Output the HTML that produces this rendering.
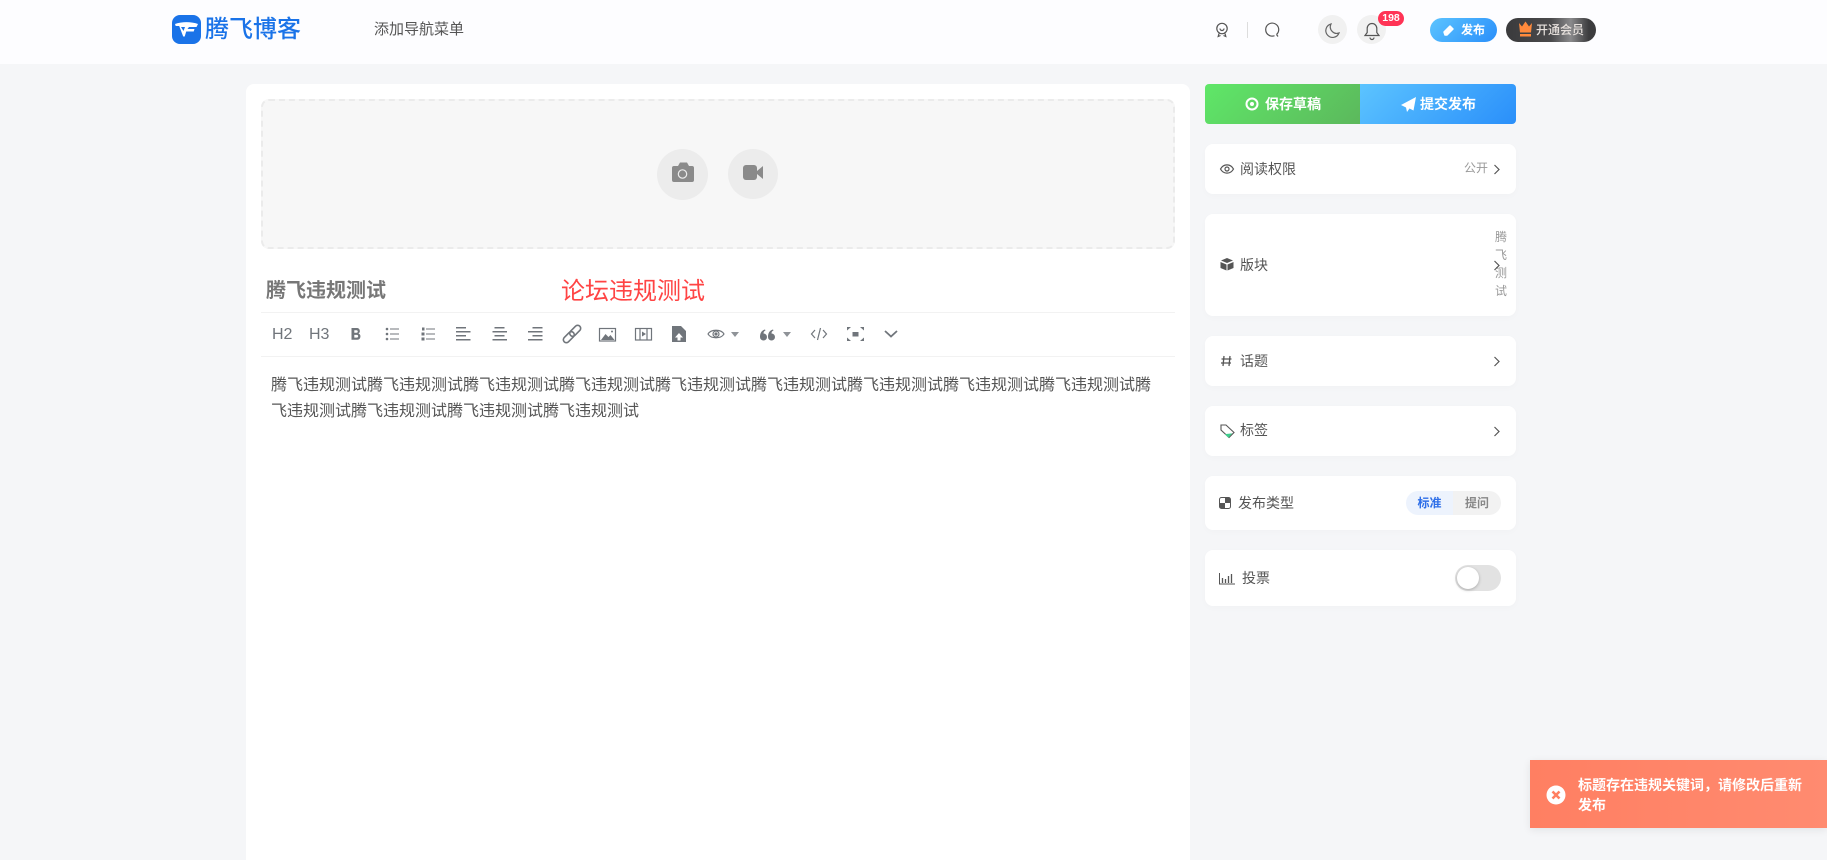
<!DOCTYPE html>
<html lang="zh"><head><meta charset="utf-8"><title>腾飞博客</title>
<style>
html,body{margin:0;padding:0;width:1827px;height:860px;overflow:hidden;background:#f5f6f8;font-family:"Liberation Sans","Noto Sans CJK SC",sans-serif;color:#555}
.a{position:absolute;white-space:nowrap}
.card{position:absolute;left:1205px;width:311px;background:#fff;border-radius:8px;box-shadow:0 2px 8px rgba(0,0,0,.02)}
.lbl{position:absolute;font-size:14px;line-height:20px;color:#555;white-space:nowrap}
svg{position:absolute;left:0;top:0}
</style></head><body>
<div class="a" style="left:0;top:0;width:1827px;height:64px;background:#fdfdff"></div>
<div class="a" style="left:205px;top:10px;font-size:24px;line-height:40px;font-weight:500;color:#1a73e8">腾飞博客</div>
<div class="a" style="left:374px;top:19px;font-size:15px;line-height:22px;color:#555">添加导航菜单</div>

<div class="a" style="left:246px;top:84px;width:944px;height:776px;background:#fff;border-radius:8px 8px 0 0"></div>
<div class="a" style="left:261px;top:99px;width:910px;height:146px;background:#f7f7f7;border:2px dashed #ebebeb;border-radius:8px"></div>
<div class="a" style="left:657px;top:149px;width:51px;height:51px;border-radius:50%;background:#ececec"></div>
<div class="a" style="left:728px;top:149px;width:50px;height:50px;border-radius:50%;background:#ececec"></div>
<div class="a" style="left:266px;top:276px;font-size:20px;line-height:30px;font-weight:700;color:#777">腾飞违规测试</div>
<div class="a" style="left:561px;top:274px;font-size:24px;line-height:36px;color:#f44">论坛违规测试</div>
<div class="a" style="left:261px;top:312px;width:914px;height:1px;background:#f2f2f2"></div>
<div class="a" style="left:261px;top:356px;width:914px;height:1px;background:#f2f2f2"></div>
<div class="a" style="left:272px;top:325px;font-size:16px;line-height:20px;color:#70757b">H2</div>
<div class="a" style="left:309px;top:325px;font-size:16px;line-height:20px;color:#70757b">H3</div>
<div class="a" style="left:271px;top:373px;width:888px;font-size:16px;line-height:26px;color:#555;white-space:normal;word-break:break-all">腾飞违规测试腾飞违规测试腾飞违规测试腾飞违规测试腾飞违规测试腾飞违规测试腾飞违规测试腾飞违规测试腾飞违规测试腾飞违规测试腾飞违规测试腾飞违规测试腾飞违规测试</div>

<div class="a" style="left:1205px;top:84px;width:155px;height:40px;background:linear-gradient(135deg,#5fe768,#5cb85c);border-radius:4px 0 0 4px"></div>
<div class="a" style="left:1360px;top:84px;width:156px;height:40px;background:linear-gradient(135deg,#5cc4ff,#2a8ffa);border-radius:0 4px 4px 0"></div>
<div class="a" style="left:1265px;top:94px;font-size:14px;line-height:20px;font-weight:700;color:#fff">保存草稿</div>
<div class="a" style="left:1420px;top:94px;font-size:14px;line-height:20px;font-weight:700;color:#fff">提交发布</div>

<div class="card" style="top:144px;height:50px"></div>
<div class="card" style="top:214px;height:102px"></div>
<div class="card" style="top:336px;height:50px"></div>
<div class="card" style="top:406px;height:50px"></div>
<div class="card" style="top:476px;height:54px"></div>
<div class="card" style="top:550px;height:56px"></div>
<div class="lbl" style="left:1240px;top:159px">阅读权限</div>
<div class="a" style="left:1464px;top:159px;font-size:12px;line-height:18px;color:#999">公开</div>
<div class="lbl" style="left:1240px;top:255px">版块</div>
<div class="a" style="left:1495px;top:228px;width:12px;font-size:12px;line-height:18px;color:#999;white-space:normal">腾飞测试</div>
<div class="lbl" style="left:1240px;top:351px">话题</div>
<div class="lbl" style="left:1240px;top:420px">标签</div>
<div class="lbl" style="left:1238px;top:493px">发布类型</div>
<div class="lbl" style="left:1242px;top:568px">投票</div>
<div class="a" style="left:1406px;top:491px;width:47px;height:24px;background:#edf3fd;border-radius:12px 0 0 12px;font-size:12px;line-height:24px;font-weight:700;color:#2f6fe8;text-align:center">标准</div>
<div class="a" style="left:1453px;top:491px;width:48px;height:24px;background:#f2f2f2;border-radius:0 12px 12px 0;font-size:12px;line-height:24px;font-weight:700;color:#888;text-align:center">提问</div>
<div class="a" style="left:1455px;top:565px;width:46px;height:26px;background:#e2e2e2;border-radius:13px"></div>
<div class="a" style="left:1457px;top:567px;width:22px;height:22px;background:#fff;border-radius:50%;box-shadow:0 1px 3px rgba(0,0,0,.25)"></div>

<div class="a" style="left:1318px;top:15px;width:29px;height:29px;border-radius:50%;background:#f1f1f1"></div>
<div class="a" style="left:1357px;top:15px;width:29px;height:29px;border-radius:50%;background:#f1f1f1"></div>
<div class="a" style="left:1378px;top:11px;width:26px;height:15px;border-radius:8px;background:#ff3355;color:#fff;font-size:10.5px;line-height:15px;font-weight:700;text-align:center">198</div>
<div class="a" style="left:1430px;top:18px;width:67px;height:24px;border-radius:12px;background:linear-gradient(135deg,#5cc4ff,#2a8ffa)"></div>
<div class="a" style="left:1461px;top:21px;font-size:12px;line-height:18px;font-weight:700;color:#fff">发布</div>
<div class="a" style="left:1506px;top:18px;width:90px;height:24px;border-radius:12px;background:linear-gradient(90deg,#3a3a3c 0%,#4a4a4c 50%,#8a8a8c 72%,#3c3c3e 92%)"></div>
<div class="a" style="left:1536px;top:21px;font-size:12px;line-height:18px;color:#e6e0dc;font-weight:500">开通会员</div>

<div class="a" style="left:1530px;top:760px;width:297px;height:68px;background:linear-gradient(90deg,#ff7f62,#ff8b70);box-shadow:0 2px 8px rgba(0,0,0,.08)"></div>
<div class="a" style="left:1578px;top:775px;width:226px;font-size:14px;line-height:20px;font-weight:700;color:#fff;white-space:normal">标题存在违规关键词，请修改后重新发布</div>

<svg width="1827" height="860" viewBox="0 0 1827 860" fill="none">
<!-- logo -->
<rect x="172" y="15" width="29" height="29" rx="8" fill="#1a73e8"/>
<path d="M175 24c7-2.500 16-2.500 23 0l-1.500 3h-7.500l-1.500 2h7l-.8 2.500h-7.500l-1.500 5h-1.500l-4-10.500h-3.500z" fill="#fff"/>
<path d="M181 27h4l-1.500 4z" fill="#1a73e8"/>
<!-- header icons -->
<g stroke="#555" stroke-width="1.200">
<circle cx="1222" cy="28.500" r="5.200"/><path d="M1219 33.500l-.8 3 2.300-1M1225 33.500l.8 3-2.300-1M1220 28.500a2 2 0 0 0 4 0"/>
<path d="M1276.500 34.500a6.500 6.500 0 1 0-2 1.200M1276.500 34.500l1.500 2"/>
</g>
<path d="M1247.500 22v16" stroke="#ddd"/>
<path d="M1331 24a6.800 6.800 0 1 0 8 9a6.500 6.500 0 0 1-8-9z" stroke="#666" stroke-width="1.200"/>
<path d="M1372 23.500a4.800 4.800 0 0 0-4.800 4.800v4.200l-2.200 3h14l-2.200-3v-4.200a4.800 4.800 0 0 0-4.800-4.800zM1370 37.500a2 2 0 0 0 4 0" stroke="#555" stroke-width="1.200"/>
<path d="M1445 35l-1 -3 6-6 3 3-6 6z" fill="#fff" stroke="#fff" stroke-width="1.500" stroke-linejoin="round"/>
<path d="M1519 23l3 3.500 3.500-5 3.500 5 3-3.500-1 9.500h-11zM1520 34h11v2.500h-11z" fill="#ff8a3c"/>
<!-- camera / video -->
<path d="M674 166h4l2-3.500h7l2 3.500h3a2 2 0 0 1 2 2v12a2 2 0 0 1-2 2h-18a2 2 0 0 1-2-2v-12a2 2 0 0 1 2-2z" fill="#8a8a8a"/>
<circle cx="682.500" cy="174" r="4.200" stroke="#ececec" stroke-width="1.200"/>
<rect x="743" y="165" width="14" height="15" rx="3" fill="#8a8a8a"/><path d="M757 171l6-5v13l-6-5z" fill="#8a8a8a"/>
<!-- buttons -->
<circle cx="1252" cy="104" r="5.500" stroke="#fff" stroke-width="2"/><circle cx="1252" cy="104" r="2" fill="#fff"/>
<path d="M1401 105l15-8-2.500 13.500-4-2-2.500 3.500-1-4.500zM1407 107l6-7" fill="#fff"/>
<!-- toolbar -->
<g fill="#70757b">
<path d="M351.500 328h5.500a3 3 0 0 1 1.500 5.500a3.300 3.300 0 0 1-1.500 6.300h-5.500zm2.800 2.300v2.500h2.200a1.250 1.250 0 0 0 0-2.500zm0 4.600v2.700h2.500a1.350 1.350 0 0 0 0-2.700z"/>
<circle cx="387" cy="329" r="1.300"/><circle cx="387" cy="334" r="1.300"/><circle cx="387" cy="339" r="1.300"/>
<rect x="390" y="328.500" width="9" height="1"/><rect x="390" y="333.500" width="9" height="1"/><rect x="390" y="338.500" width="9" height="1"/>
<rect x="426" y="328.500" width="9" height="1"/><rect x="426" y="333.500" width="9" height="1"/><rect x="426" y="338.500" width="9" height="1"/>
<rect x="422" y="327.500" width="2.500" height="3"/><rect x="421.500" y="332.500" width="3" height="3"/><rect x="421.500" y="337.500" width="3" height="3"/>
<rect x="456" y="327" width="10" height="1.500"/><rect x="456" y="331" width="14.500" height="1.500"/><rect x="456" y="335" width="10" height="1.500"/><rect x="456" y="339" width="14.500" height="1.500"/>
<rect x="494.500" y="327" width="10" height="1.500"/><rect x="492.500" y="331" width="14.500" height="1.500"/><rect x="494.500" y="335" width="10" height="1.500"/><rect x="492.500" y="339" width="14.500" height="1.500"/>
<rect x="532.500" y="327" width="10" height="1.500"/><rect x="528" y="331" width="14.500" height="1.500"/><rect x="532.500" y="335" width="10" height="1.500"/><rect x="528" y="339" width="14.500" height="1.500"/>
<path d="M672 326h9l5 5v11h-14zM679 333l-4 4.500h2.500v3h3v-3h2.500z" fill-rule="evenodd"/>
<path d="M731 332h8l-4 5zM783 332h8l-4 5z" fill="#8f9398"/>
<path d="M760 337a3.500 3.500 0 1 0 3.500-3.500c0-1.500.6-2.500 2-3l-.5-1c-3 .8-5 3-5 7.500zM768 337a3.500 3.500 0 1 0 3.500-3.500c0-1.500.6-2.500 2-3l-.5-1c-3 .8-5 3-5 7.500z"/>
<rect x="852.500" y="332" width="6" height="4.500"/>
<path d="M847 327h4l-4 3.500zM864 327h-4l4 3.500zM847 341h4l-4-3.500zM864 341h-4l4-3.500z"/>
</g>
<g stroke="#70757b" stroke-width="1.200">
<g transform="rotate(-45 572 334)" stroke-width="1.600"><rect x="561" y="331" width="13" height="6" rx="3"/><rect x="570" y="331" width="13" height="6" rx="3"/></g>
<rect x="599.500" y="328.500" width="16" height="12.500"/><path d="M601 340l4.500-6 3 3 2-2 4 5z" fill="#70757b" stroke="none"/><circle cx="612" cy="331.500" r="1" fill="#70757b" stroke="none"/>
<rect x="635.500" y="328.500" width="16" height="11.500"/><path d="M640 328v12M647 328v12"/><path d="M642 331.500l4 2.500-4 2.500z" fill="#70757b" stroke="none"/>
<path d="M708 334c3-5 13-5 16 0c-3 5-13 5-16 0z"/><circle cx="716" cy="334" r="3"/><circle cx="716" cy="334" r="1" fill="#70757b"/>
<path d="M815 330l-3.500 4 3.500 4M823 330l3.500 4-3.500 4M820.500 328l-3 12"/>
<path d="M885 331l6 5.500 6-5.500" stroke-width="1.800"/>
</g>
<!-- chevrons -->
<g stroke="#555" stroke-width="1.200"><path d="M1494.500 165l4.500 4.500-4.500 4.500M1494.500 261l4.500 4.500-4.500 4.500M1494.500 357l4.500 4.500-4.500 4.500M1494.500 427l4.500 4.500-4.500 4.500"/></g>
<!-- side icons -->
<g stroke="#555" stroke-width="1.200"><path d="M1220.500 169c3-5.500 10-5.500 13 0c-3 5.500-10 5.500-13 0z"/><circle cx="1227" cy="169" r="2"/></g>
<path d="M1227 258l6 2.500-6 2.500-6-2.500zM1220.500 262l6 2.500v6l-6-2.500zM1233.500 262l-6 2.500v6l6-2.500z" fill="#555"/>
<path d="M1224 356l-1 10M1230 356l-1 10M1221.500 359h10M1221 363h10" stroke="#555" stroke-width="1.300"/>
<path d="M1221 425v5l8 7.500 5-5-8-7.500z" stroke="#555" stroke-width="1.100"/><path d="M1226 434.500l5-.5-2.500 3z" fill="#3fcf8e" stroke="#3fcf8e"/>
<rect x="1219.500" y="497.500" width="11" height="11" rx="2" stroke="#555"/><path d="M1225 497.500h3.500a2 2 0 0 1 2 2v3.500h-5.500zM1225 503v5.500h-3.500a2 2 0 0 1-2-2v-3.500z" fill="#555"/>
<path d="M1219.500 573v11h15.500" stroke="#555"/><path d="M1222.500 578v5M1225.500 579v4M1228.500 576v7M1231.500 574v9" stroke="#555" stroke-width="1.300"/>
<!-- toast icon -->
<circle cx="1556" cy="795" r="9.500" fill="#fff"/><path d="M1552.500 791.500l7 7M1559.500 791.500l-7 7" stroke="#ff7f60" stroke-width="2.600"/>
</svg>
</body></html>
